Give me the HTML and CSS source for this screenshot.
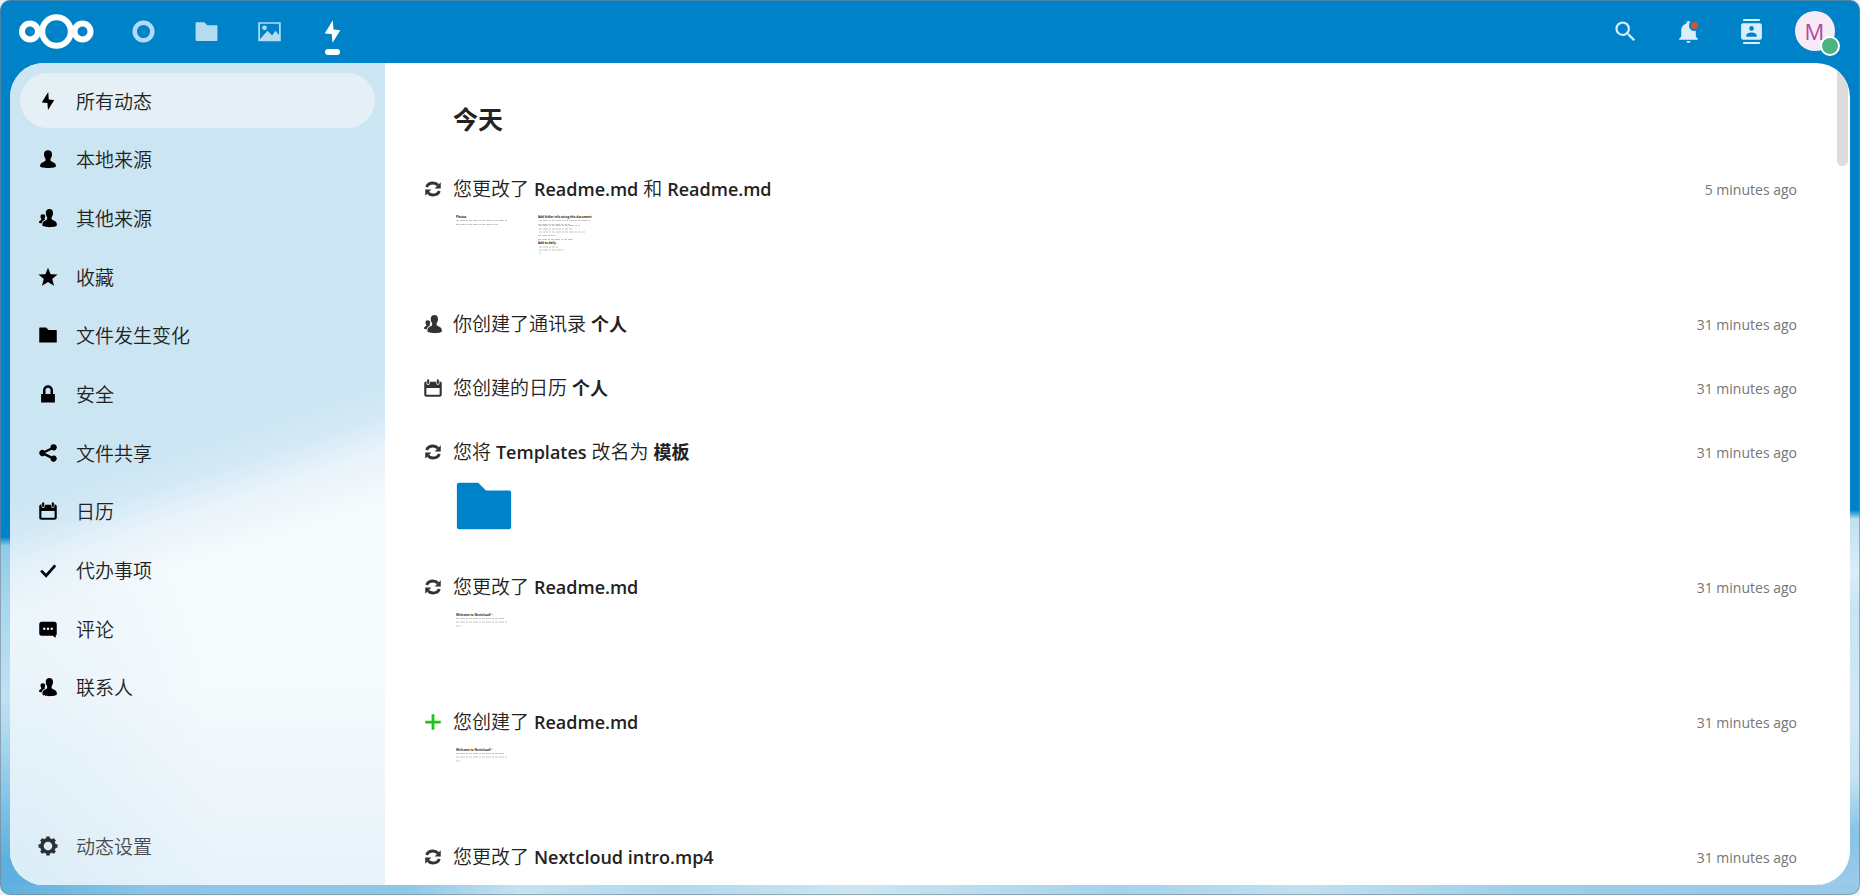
FILE: index.html
```html
<!DOCTYPE html>
<html lang="zh-CN">
<head>
<meta charset="utf-8">
<title>动态 - Nextcloud</title>
<link rel="stylesheet" href="styles.css">
</head>
<body>
<svg class="sprite" aria-hidden="true">
  <symbol id="i-activity" viewBox="0 0 16 16"><path d="M8.2.8 3 9.2l4.5.4.5 5.6L13 7.2l-4.4-.5z"/></symbol>
  <symbol id="i-user" viewBox="0 0 16 16"><path d="M8 1C6 1 4.800 2.200 4.800 4.200c0 1.500.400 2.600 1.200 3.500v1.500c-.300.700-1.300 1-2.500 1.500C2 11.300 1.700 12.300 1.700 14c0 .600 2.600 1.200 6.300 1.200s6.300-.600 6.300-1.200c0-1.700-.300-2.700-1.800-3.300-1.200-.5-2.200-.8-2.500-1.500V7.700c.8-.9 1.200-2 1.200-3.500C11.200 2.200 10 1 8 1z"/></symbol>
  <symbol id="i-contacts" viewBox="0 0 16 16"><path d="M9.200.8C7.300.8 6.200 2 6.200 3.900c0 1.400.4 2.400 1.100 3.200v1.700c-.3.700-.8.8-1.600 1.100-1.600.6-2.200 1.700-2.200 3.700 0 1.200 2.400 1.700 5.700 1.700s5.900-.5 5.900-1.700c0-2.200-.8-3.100-2.500-3.700-.9-.3-1.500-.5-1.700-1.100V7.100c.7-.8 1.100-1.800 1.100-3.200 0-1.900-1-3.100-2.800-3.100z"/><path d="M3.700 5c-1.100 0-1.700.7-1.700 1.700 0 .8.200 1.300.6 1.800v.9c-.3.500-1.800.6-1.800 1.900 0 .600.900.9 2.200.9.400-1.500 1-2.400 2.800-3.100-.4-.2-.5-.4-.5-.6v-.4c.4-.4.500-.8.500-1.500C5.800 5.600 5 5 3.700 5z"/></symbol>
  <symbol id="i-star" viewBox="0 0 16 16"><path d="M8 .5 5.900 5.700.4 6l4.200 3.500L3.200 15 8 12l4.800 3-1.400-5.500L15.600 6l-5.500-.3z"/></symbol>
  <symbol id="i-folder" viewBox="0 0 16 16"><path d="M1.500 2a.5.5 0 0 0-.5.5v11c0 .26.240.5.5.5h13c.260 0 .5-.240.5-.5v-9a.5.5 0 0 0-.5-.5h-6l-2-2z"/></symbol>
  <symbol id="i-lock" viewBox="0 0 16 16"><path d="M8 1a4 4 0 0 0-4 4v3H2.500v6.800h11V8H12V5a4 4 0 0 0-4-4zm0 2a2 2 0 0 1 2 2v3H6V5a2 2 0 0 1 2-2z"/></symbol>
  <symbol id="i-share" viewBox="0 0 16 16"><path d="M12.500 1a2.500 2.500 0 0 0-2.500 2.700L5.200 6.100a2.500 2.500 0 1 0 0 3.800L10 12.300a2.500 2.500 0 1 0 .9-1.700L6 8.200v-.4l4.900-2.400A2.500 2.500 0 1 0 12.500 1z"/></symbol>
  <symbol id="i-calendar" viewBox="0 0 16 16"><path fill-rule="evenodd" d="M2.800 2.500C1.700 2.600 1 3.200 1 4.200v9c0 1.100.7 1.800 1.800 1.800h10.400c1.100 0 1.800-.7 1.800-1.800v-9c0-1-.7-1.600-1.800-1.700v1.700a1.300 1.300 0 0 1-2.600 0v-1.200H5.400v1.200a1.300 1.300 0 0 1-2.600 0zM2.700 8h10.600v5.300H2.700z"/><rect x="3.300" y="1" width="1.600" height="3.800" rx=".8"/><rect x="11.100" y="1" width="1.600" height="3.800" rx=".8"/></symbol>
  <symbol id="i-check" viewBox="0 0 16 16"><path d="m2.500 8.500 4 4 7.300-8.200" fill="none" stroke="currentColor" stroke-width="2.200"/></symbol>
  <symbol id="i-comment" viewBox="0 0 16 16"><path fill-rule="evenodd" d="M3 2.200h10a2 2 0 0 1 2 2v7.300c0 1-.3 1.500-.9 1.700l.3 1.600c-1 0-1.700-.6-2.400-1.400H3a2 2 0 0 1-2-2V4.200a2 2 0 0 1 2-2zM5 6.800a1 1 0 1 0 0 2 1 1 0 0 0 0-2zm3 0a1 1 0 1 0 0 2 1 1 0 0 0 0-2zm3 0a1 1 0 1 0 0 2 1 1 0 0 0 0-2z"/></symbol>
  <symbol id="i-gear" viewBox="0 0 16 16"><circle cx="8" cy="8" r="4.900" fill="none" stroke="currentColor" stroke-width="2.900"/><path d="M8 .4v3M8 12.600v3M.4 8h3M12.600 8h3M2.600 2.600l2 2M11.400 11.400l2 2M2.600 13.400l2-2M11.400 4.600l2-2" stroke="currentColor" stroke-width="2.800"/></symbol>
  <symbol id="i-change" viewBox="0 0 16 16"><path d="M2.900 6.400C3.700 4.300 5.600 3.200 8 3.200c1.700 0 3 .6 4 1.800M13.100 9.600C12.300 11.700 10.400 12.800 8 12.800c-1.700 0-3-.6-4-1.800" fill="none" stroke="currentColor" stroke-width="2.300"/><path d="M14.200 2.600v5H9.300zM1.800 13.400v-5h4.900z"/></symbol>
  <symbol id="i-add" viewBox="0 0 16 16"><path d="M8 1.800v12.400M1.800 8h12.400" stroke="currentColor" stroke-width="2.200"/></symbol>
  <symbol id="i-picture" viewBox="0 0 16 16"><path fill-rule="evenodd" d="M.8 2v12.200h14.400V2zM1.900 3.100h12.200v7.100l-2.300-2.700-2.100 3-3-3-4.800 5.500z"/><circle cx="4.800" cy="5.600" r="1.500"/></symbol>
  <symbol id="i-magnify" viewBox="0 0 24 24"><path d="M9.500,3A6.500,6.500 0 0,1 16,9.500C16,11.110 15.410,12.590 14.440,13.730L14.710,14H15.500L20.500,19L19,20.500L14,15.500V14.710L13.730,14.440C12.590,15.410 11.110,16 9.500,16A6.500,6.500 0 0,1 3,9.500A6.500,6.500 0 0,1 9.500,3M9.500,5C7,5 5,7 5,9.500C5,12 7,14 9.500,14C12,14 14,12 14,9.500C14,7 12,5 9.500,5Z"/></symbol>
  <symbol id="i-bell" viewBox="0 0 24 24"><path d="M21,19V20H3V19L5,17V11C5,7.900 7.030,5.170 10,4.290C10,4.190 10,4.100 10,4A2,2 0 0,1 12,2A2,2 0 0,1 14,4C14,4.100 14,4.190 14,4.290C16.970,5.170 19,7.900 19,11V17L21,19M14,21A2,2 0 0,1 12,23A2,2 0 0,1 10,21"/></symbol>
  <symbol id="i-addressbook" viewBox="0 0 24 24"><path d="M20,0H4V2H20V0M4,24H20V22H4V24M20,4H4A2,2 0 0,0 2,6V18A2,2 0 0,0 4,20H20A2,2 0 0,0 22,18V6A2,2 0 0,0 20,4M12,6.750A2.250,2.250 0 0,1 14.250,9A2.250,2.250 0 0,1 12,11.250A2.250,2.250 0 0,1 9.750,9A2.250,2.250 0 0,1 12,6.750M17,17H7V15.500C7,13.830 10.330,13 12,13C13.670,13 17,13.830 17,15.500V17Z"/></symbol>
</svg>

<div class="window">
  <header class="topbar">
    <a class="logo" href="#" aria-label="Nextcloud">
      <svg viewBox="0 0 76 36" fill="none" stroke="#fff" stroke-width="6"><circle cx="38.500" cy="18.500" r="14.300"/><circle cx="12" cy="18.500" r="8"/><circle cx="64.500" cy="18.500" r="8"/></svg>
    </a>
    <nav class="apps" aria-label="应用">
      <a class="app" href="#" aria-label="仪表盘"><svg class="icon-lg" viewBox="0 0 25 25"><circle cx="12.500" cy="12.500" r="8.800" fill="none" stroke="currentColor" stroke-width="4.500"/></svg></a>
      <a class="app" href="#" aria-label="文件"><svg class="icon-lg"><use href="#i-folder"/></svg></a>
      <a class="app" href="#" aria-label="照片"><svg class="icon-lg"><use href="#i-picture"/></svg></a>
      <a class="app app-active" href="#" aria-label="动态" aria-current="page"><svg class="icon-lg"><use href="#i-activity"/></svg></a>
    </nav>
    <div class="tools">
      <button class="tool" aria-label="搜索"><svg class="icon-xl"><use href="#i-magnify"/></svg></button>
      <button class="tool" aria-label="通知"><svg class="icon-lg"><use href="#i-bell"/></svg><span class="unread"></span></button>
      <button class="tool" aria-label="联系人"><svg class="icon-lg"><use href="#i-addressbook"/></svg></button>
      <button class="tool" aria-label="用户菜单"><span class="avatar">M<span class="status"></span></span></button>
    </div>
  </header>

  <div class="panel">
    <nav class="side" aria-label="动态">
      <ul class="side-list">
        <li><a class="side-item side-current" href="#"><svg class="icon"><use href="#i-activity"/></svg>所有动态</a></li>
        <li><a class="side-item" href="#"><svg class="icon"><use href="#i-user"/></svg>本地来源</a></li>
        <li><a class="side-item" href="#"><svg class="icon"><use href="#i-contacts"/></svg>其他来源</a></li>
        <li><a class="side-item" href="#"><svg class="icon"><use href="#i-star"/></svg>收藏</a></li>
        <li><a class="side-item" href="#"><svg class="icon"><use href="#i-folder"/></svg>文件发生变化</a></li>
        <li><a class="side-item" href="#"><svg class="icon"><use href="#i-lock"/></svg>安全</a></li>
        <li><a class="side-item" href="#"><svg class="icon"><use href="#i-share"/></svg>文件共享</a></li>
        <li><a class="side-item" href="#"><svg class="icon"><use href="#i-calendar"/></svg>日历</a></li>
        <li><a class="side-item" href="#"><svg class="icon"><use href="#i-check"/></svg>代办事项</a></li>
        <li><a class="side-item" href="#"><svg class="icon"><use href="#i-comment"/></svg>评论</a></li>
        <li><a class="side-item" href="#"><svg class="icon"><use href="#i-contacts"/></svg>联系人</a></li>
      </ul>
      <button class="side-item side-settings"><svg class="icon"><use href="#i-gear"/></svg>动态设置</button>
    </nav>

    <main class="feed">
      <h2 class="day">今天</h2>
      <article class="entry">
        <svg class="icon"><use href="#i-change"/></svg>
        <div class="entry-body">
          <p class="subject">您更改了 <strong>Readme.md</strong> 和 <strong>Readme.md</strong></p>
          <div class="previews">
            <svg class="preview" viewBox="0 0 62 62"><text x="3" y="6" font-size="3" font-weight="700">Photos</text><path d="M3 8.500h51M3 12.500h43"/></svg>
            <svg class="preview" viewBox="0 0 62 62"><text x="3" y="6" font-size="3" font-weight="700">Add folder info using this document</text><path d="M4 8.500h51M3 12.500h32M4 13.500h41M4 17h33M4 20h46M3 23.500h18M3 27.500h36M4 35h19M4 38h26M4 41h2"/><text x="3" y="32" font-size="3" font-weight="700">Add to daily</text></svg>
          </div>
        </div>
        <time class="when">5 minutes ago</time>
      </article>
      <article class="entry">
        <svg class="icon"><use href="#i-contacts"/></svg>
        <div class="entry-body"><p class="subject">你创建了通讯录 <strong>个人</strong></p></div>
        <time class="when">31 minutes ago</time>
      </article>
      <article class="entry">
        <svg class="icon"><use href="#i-calendar"/></svg>
        <div class="entry-body"><p class="subject">您创建的日历 <strong>个人</strong></p></div>
        <time class="when">31 minutes ago</time>
      </article>
      <article class="entry">
        <svg class="icon"><use href="#i-change"/></svg>
        <div class="entry-body">
          <p class="subject">您将 <strong>Templates</strong> 改名为 <strong>模板</strong></p>
          <div class="previews"><svg class="preview preview-folder"><use href="#i-folder"/></svg></div>
        </div>
        <time class="when">31 minutes ago</time>
      </article>
      <article class="entry">
        <svg class="icon"><use href="#i-change"/></svg>
        <div class="entry-body">
          <p class="subject">您更改了 <strong>Readme.md</strong></p>
          <div class="previews"><svg class="preview" viewBox="0 0 62 62"><text x="3" y="6" font-size="3" font-weight="700">Welcome to Nextcloud!</text><path d="M37 4.500h3M3 8.500h48M3 12h52M3 16h5"/></svg></div>
        </div>
        <time class="when">31 minutes ago</time>
      </article>
      <article class="entry">
        <svg class="icon icon-add"><use href="#i-add"/></svg>
        <div class="entry-body">
          <p class="subject">您创建了 <strong>Readme.md</strong></p>
          <div class="previews"><svg class="preview" viewBox="0 0 62 62"><text x="3" y="6" font-size="3" font-weight="700">Welcome to Nextcloud!</text><path d="M37 4.500h3M3 8.500h48M3 12h52M3 16h5"/></svg></div>
        </div>
        <time class="when">31 minutes ago</time>
      </article>
      <article class="entry">
        <svg class="icon"><use href="#i-change"/></svg>
        <div class="entry-body"><p class="subject">您更改了 <strong>Nextcloud intro.mp4</strong></p></div>
        <time class="when">31 minutes ago</time>
      </article>
    </main>
    <span class="scroll-thumb"></span>
  </div>
</div>
</body>
</html>
```
FILE: styles.css
```css
* {
  box-sizing: border-box;
}

body {
  margin: 0;
  background: #eef1f3;
  color: #222;
  font-family: "Open Sans", "Noto Sans CJK SC", sans-serif;
  font-size: 19px;
}

a {
  color: inherit;
  text-decoration: none;
}

button {
  border: 0;
  padding: 0;
  background: none;
  color: inherit;
  font: inherit;
  cursor: pointer;
}

svg {
  display: block;
  flex: none;
  fill: currentColor;
}

.sprite {
  position: absolute;
  width: 0;
  height: 0;
}

.icon {
  width: 20px;
  height: 20px;
}

.icon-lg {
  width: 25px;
  height: 25px;
}

.icon-xl {
  width: 27px;
  height: 27px;
}

/* Sky backdrop: clouds show along the left, right and bottom edges */
.window {
  display: flex;
  flex-direction: column;
  height: 100vh;
  padding: 0 10px 10px;
  border-radius: 10px;
  overflow: hidden;
  box-shadow: inset 0 0 0 1px rgba(120, 130, 140, 0.6);
  background:
    linear-gradient(to right, #5fb0de 0%, #8cc5e6 8%, #8fc7e7 22%, #c4e2f2 28%, #b0d8ee 36%, #cbe6f3 46%, #a5d2ec 60%, #c0e0f2 70%, #9dcfea 82%, #96c8e8 100%) bottom / 100% 10px no-repeat,
    linear-gradient(to bottom, transparent 60%, #8fcbe9 61%, #a9d7ef 68%, #bfe1f3 78%, #a3d3ed 84%, #5fb0de 96%) left / 40px 100% no-repeat,
    linear-gradient(to bottom, transparent 57%, #bfe0f1 58%, #dcedf8 64%, #c8e4f2 68%, #d3e8f5 80%, #c4e2f2 87%, #88c3e5 93%, #9ccbea 99%) right / 40px 100% no-repeat,
    #0082c9;
}

.topbar {
  display: flex;
  align-items: center;
  flex: none;
  height: 63px;
  padding-bottom: 1px;
  color: #fff;
}

.logo {
  margin-left: 8px;
}

.logo svg {
  width: 76px;
  height: 36px;
  fill: none;
}

.apps {
  display: flex;
  margin-left: 18px;
}

.app,
.tool {
  position: relative;
  display: flex;
  align-items: center;
  justify-content: center;
  width: 63px;
  height: 62px;
}

.app {
  color: #b3dcf3;
}

.app-active {
  color: #fff;
}

.app-active::after {
  content: "";
  position: absolute;
  bottom: 7px;
  left: 24px;
  width: 15px;
  height: 6px;
  border-radius: 3px;
  background: #fff;
}

.tools {
  display: flex;
  margin-left: auto;
  margin-right: 4px;
}

.tool {
  color: #d9eefa;
}

.unread {
  position: absolute;
  top: 20px;
  left: 32px;
  width: 11px;
  height: 11px;
  border: 2px solid #0082c9;
  border-radius: 50%;
  background: #d9512c;
}

.avatar {
  position: relative;
  width: 40px;
  height: 40px;
  border-radius: 50%;
  background: #f5eaf5;
  color: #b04a9b;
  font-size: 22px;
  line-height: 40px;
}

.status {
  position: absolute;
  right: -5px;
  bottom: -5px;
  width: 20px;
  height: 20px;
  border: 2px solid #fff;
  border-radius: 50%;
  background: #49b382;
}

.panel {
  position: relative;
  display: flex;
  flex: 1;
  min-height: 0;
  border-radius: 34px;
  overflow: hidden;
  background: #fff;
}

.side {
  display: flex;
  flex-direction: column;
  flex: none;
  width: 375px;
  padding: 10px 10px 12px;
  background:
    radial-gradient(ellipse at 0% 100%, rgba(205, 230, 244, 0.5), transparent 40%),
    linear-gradient(to bottom, transparent 76%, rgba(222, 238, 248, 0.6) 100%),
    linear-gradient(162deg, #cce5f3 46%, #d3e9f6 50%, #e9f3fa 54%, #f5fafd 59%);
}

.side-list {
  display: flex;
  flex-direction: column;
  flex: 1;
  justify-content: space-between;
  max-height: 642px;
  margin: 0;
  padding: 0;
  list-style: none;
}

.side-item {
  display: flex;
  align-items: center;
  gap: 18px;
  width: 100%;
  height: 55px;
  padding: 0 18px;
  border-radius: 28px;
  font-weight: 350;
}

.side-item .icon {
  color: #000;
}

.side-current {
  background: #e4f0f5;
}

.side-settings {
  margin-top: auto;
  opacity: 0.8;
}

.feed {
  flex: 1;
  min-width: 0;
  padding: 37px 53px 0 38px;
  overflow: hidden;
}

.day {
  margin: 0 0 18px 30px;
  font-size: 25px;
  line-height: 38px;
}

.entry {
  display: flex;
  gap: 10px;
  padding: 20px 0 17px;
}

.entry > .icon {
  margin-top: 3px;
  color: #333;
}

.entry > .icon-add {
  color: #1ec31e;
}

.entry-body {
  flex: 1;
  min-width: 0;
}

.subject {
  margin: 0;
  font-weight: 350;
  line-height: 27px;
}

.subject strong {
  font-size: 18px;
  font-weight: 600;
}

.previews {
  display: flex;
  gap: 20px;
  margin-top: 9px;
}

.preview {
  width: 62px;
  height: 62px;
}

.preview path {
  stroke: #c4c4c4;
  stroke-width: 1px;
  stroke-dasharray: 3 1 5 1 2 1;
}

.preview-folder {
  color: #0082c9;
}

.when {
  color: #767676;
  font-size: 14px;
  line-height: 27px;
}

.scroll-thumb {
  position: absolute;
  top: 0;
  right: 2px;
  width: 11px;
  height: 103px;
  border-radius: 0 0 5px 5px;
  background: #dcdcdc;
}
```
